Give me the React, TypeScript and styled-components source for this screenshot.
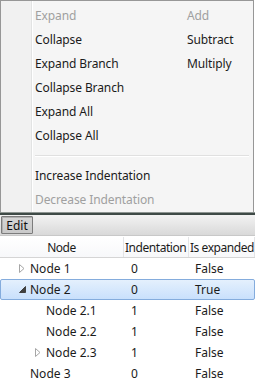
import React, { FC } from 'react';
import styled, { createGlobalStyle } from 'styled-components';

const GlobalStyle = createGlobalStyle`
  html, body {
    margin: 0;
    padding: 0;
    background: #ffffff;
    overflow: hidden;
  }
  body {
    font-family: "Noto Sans", "Liberation Sans", sans-serif;
    font-size: 12px;
  }
`;

const Page = styled.div`
  width: 255px;
  height: 385px;
  display: flex;
  flex-direction: column;
  background: #ffffff;
`;

const Menu = styled.div`
  height: 212px;
  width: 254px;
  box-sizing: border-box;
  border: 1px solid #979797;
  border-bottom: none;
  background: #f5f5f5;
  display: flex;
`;

const Gutter = styled.div`
  width: 30px;
  background: #f1f1f1;
  border-right: 1px solid #e2e3e3;
  box-shadow: 1px 0 0 #ffffff;
`;

const Items = styled.div`
  flex: 1;
  padding: 2px 2px 0 3px;
  display: flex;
  flex-direction: column;
`;

const Item = styled.div<{ disabled?: boolean }>`
  height: 24px;
  display: grid;
  grid-template-columns: 152px 1fr;
  align-items: center;
  color: ${p => (p.disabled ? '#a0a0a0' : '#1b1b1b')};
  letter-spacing: -0.1px;
`;

const Gesture = styled.span<{ disabled?: boolean }>`
  color: ${p => (p.disabled ? '#a0a0a0' : '#1b1b1b')};
`;

const Separator = styled.div`
  height: 16px;
  display: flex;
  align-items: center;
  margin-right: 2px;
  &::after {
    content: '';
    flex: 1;
    height: 1px;
    background: #e0e0e0;
    box-shadow: 0 1px 0 #ffffff;
  }
`;

const MenuEdge = styled.div`
  height: 2px;
  background: #3e4a46;
  border-top: 1px solid #8e9592;
`;

const MenuBar = styled.div`
  height: 20px;
  background: linear-gradient(#f3f3f3, #e3e3e3 60%, #d9d9d9);
  border-bottom: 1px solid #c8c8c8;
  display: flex;
  align-items: center;
  padding-left: 1px;
`;

const BarButton = styled.div`
  height: 16px;
  width: 30px;
  border: 1px solid #7c7c7c;
  border-radius: 1px;
  background: linear-gradient(#d6d6d6, #c9c9c9);
  box-shadow: inset 1px 1px 0 #b0b0b0;
  display: flex;
  align-items: center;
  justify-content: center;
  color: #101010;
`;

const Grid = styled.div`
  flex: 1;
  display: flex;
  flex-direction: column;
  border-top: 1px solid #ffffff;
`;

const Header = styled.div`
  height: 20px;
  display: grid;
  grid-template-columns: 124px 65px 1fr;
  background: linear-gradient(#ffffff, #f7f8fa);
  border-bottom: 1px solid #d5d5d5;
`;

const HeaderCell = styled.div<{ center?: boolean }>`
  display: flex;
  align-items: center;
  justify-content: ${p => (p.center ? 'center' : 'flex-start')};
  padding-left: ${p => (p.center ? '0' : '1px')};
  border-right: 1px solid #e3e4e6;
  color: #1b1b1b;
  white-space: nowrap;
  letter-spacing: -0.45px;
`;

const Row = styled.div<{ selected?: boolean }>`
  height: 21px;
  box-sizing: border-box;
  display: grid;
  grid-template-columns: 124px 65px 1fr;
  align-items: center;
  color: #1b1b1b;
  ${p =>
    p.selected
      ? `
    background: linear-gradient(#e4f0fd, #c9e0fc);
    border: 1px solid #84acdd;
    border-radius: 2px;
  `
      : 'border: 1px solid transparent;'}
`;

const NodeCell = styled.div<{ depth: number }>`
  display: flex;
  align-items: center;
  padding-left: ${p => 13 + p.depth * 16}px;
`;

const Toggle = styled.span`
  width: 16px;
  height: 16px;
  display: inline-flex;
  align-items: center;
  justify-content: center;
  margin-left: -16px;
`;

const ValueCell = styled.div<{ pad: number }>`
  padding-left: ${p => p.pad}px;
`;

interface MenuEntry {
  label: string;
  gesture?: string;
  disabled?: boolean;
  gestureDisabled?: boolean;
}

const topItems: MenuEntry[] = [
  { label: 'Expand', gesture: 'Add', disabled: true, gestureDisabled: true },
  { label: 'Collapse', gesture: 'Subtract' },
  { label: 'Expand Branch', gesture: 'Multiply' },
  { label: 'Collapse Branch' },
  { label: 'Expand All' },
  { label: 'Collapse All' },
];

const bottomItems: MenuEntry[] = [
  { label: 'Increase Indentation' },
  { label: 'Decrease Indentation', disabled: true },
];

interface TreeRow {
  name: string;
  depth: number;
  indentation: number;
  expanded: boolean;
  toggle?: 'open' | 'closed';
  selected?: boolean;
}

const rows: TreeRow[] = [
  { name: 'Node 1', depth: 1, indentation: 0, expanded: false, toggle: 'closed' },
  { name: 'Node 2', depth: 1, indentation: 0, expanded: true, toggle: 'open', selected: true },
  { name: 'Node 2.1', depth: 2, indentation: 1, expanded: false },
  { name: 'Node 2.2', depth: 2, indentation: 1, expanded: false },
  { name: 'Node 2.3', depth: 2, indentation: 1, expanded: false, toggle: 'closed' },
  { name: 'Node 3', depth: 1, indentation: 0, expanded: false },
];

const Arrow: FC<{ kind: 'open' | 'closed' }> = ({ kind }) =>
  kind === 'closed' ? (
    <svg width="6" height="9" viewBox="0 0 6 9">
      <path d="M0.5 0.5 L5 4.5 L0.5 8.5 Z" fill="#ffffff" stroke="#a6a6a6" />
    </svg>
  ) : (
    <svg width="7" height="7" viewBox="0 0 7 7">
      <path d="M6.5 0.5 L6.5 6.5 L0.5 6.5 Z" fill="#404040" stroke="#404040" />
    </svg>
  );

const renderItem = (m: MenuEntry) => (
  <Item key={m.label} disabled={m.disabled}>
    <span>{m.label}</span>
    {m.gesture && <Gesture disabled={m.gestureDisabled}>{m.gesture}</Gesture>}
  </Item>
);

const App: FC = () => {
  return (
    <Page>
      <GlobalStyle />
      <Menu>
        <Gutter />
        <Items>
          {topItems.map(renderItem)}
          <Separator />
          {bottomItems.map(renderItem)}
        </Items>
      </Menu>
      <MenuEdge />
      <MenuBar>
        <BarButton>Edit</BarButton>
      </MenuBar>
      <Grid>
        <Header>
          <HeaderCell center>Node</HeaderCell>
          <HeaderCell>Indentation</HeaderCell>
          <HeaderCell>Is expanded</HeaderCell>
        </Header>
        {rows.map(r => (
          <Row key={r.name} selected={r.selected}>
            <NodeCell depth={r.depth}>
              {r.toggle && (
                <Toggle>
                  <Arrow kind={r.toggle} />
                </Toggle>
              )}
              {r.name}
            </NodeCell>
            <ValueCell pad={6}>{r.indentation}</ValueCell>
            <ValueCell pad={5}>{r.expanded ? 'True' : 'False'}</ValueCell>
          </Row>
        ))}
      </Grid>
    </Page>
  );
};

export default App;
